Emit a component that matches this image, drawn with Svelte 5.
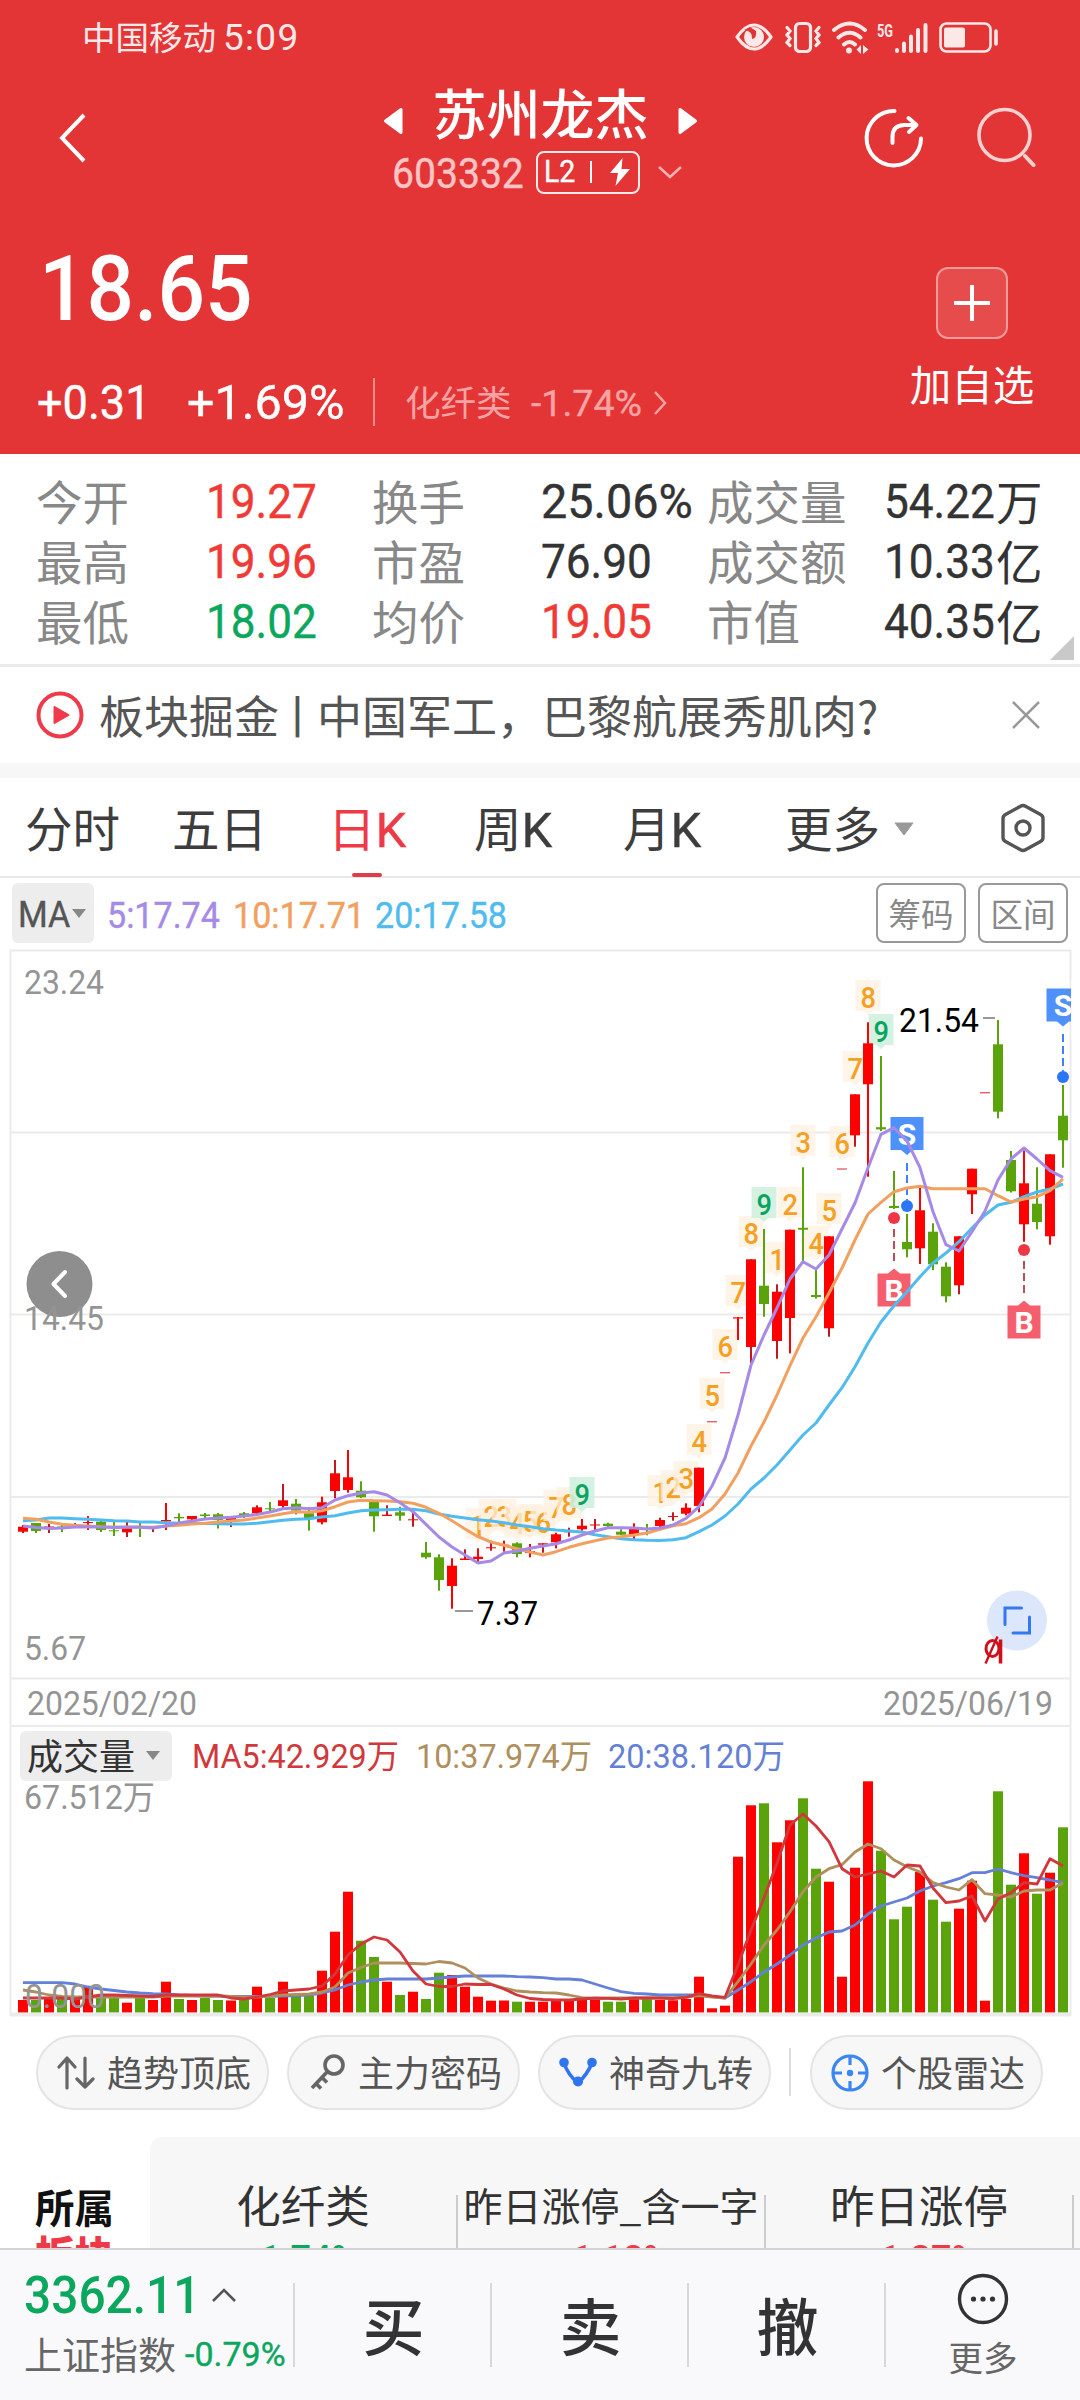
<script>
  const X0 = 23;
  const STEP = 13;
  const cx = (i) => X0 + STEP * i;

  // [direction, body top, body bottom, high, low]
  const candles = [
    ['r', 1526.7, 1531.7, 1525, 1533], ['g', 1523, 1531, 1523, 1533], ['r', 1526.5, 1528, 1524, 1533],
    ['g', 1526.5, 1528, 1525, 1532], ['r', 1526.5, 1527.5, 1523, 1528], ['r', 1522, 1523, 1516, 1530],
    ['g', 1521.7, 1530, 1520, 1532], ['g', 1530.3, 1531.3, 1520, 1536], ['r', 1527.3, 1532.3, 1521, 1537],
    ['g', 1526.5, 1527.5, 1523, 1537], ['r', 1526.5, 1528, 1526, 1532], ['r', 1520, 1521.5, 1503, 1530],
    ['g', 1517, 1518.3, 1513.3, 1522], ['r', 1516, 1519.3, 1516, 1520], ['g', 1514.5, 1516, 1513, 1518],
    ['g', 1514.3, 1520, 1513, 1528.5], ['r', 1517.5, 1520, 1517, 1527], ['g', 1513.3, 1515, 1512, 1518],
    ['r', 1507.3, 1513.3, 1505.3, 1514], ['g', 1508.3, 1509.3, 1502, 1511], ['r', 1500.3, 1506, 1484, 1508],
    ['g', 1503.7, 1510.5, 1499, 1514.5], ['g', 1513.3, 1518, 1507, 1530.7], ['r', 1502.3, 1522.3, 1496.7, 1524.3],
    ['r', 1473.3, 1491, 1460, 1498.3], ['r', 1477.3, 1490, 1450, 1492.7], ['g', 1490.7, 1497.3, 1481.3, 1498],
    ['g', 1502, 1516.3, 1502, 1531.7], ['r', 1514.7, 1516, 1505.3, 1516], ['g', 1512.3, 1515.7, 1506.7, 1520.7],
    ['r', 1519.3, 1520.3, 1512.7, 1526.7], ['g', 1552.7, 1557.3, 1542, 1558.7], ['g', 1557.3, 1580, 1554.3, 1590.7],
    ['r', 1565.7, 1586, 1558.3, 1608.7], ['r', 1558.5, 1560, 1549.3, 1560], ['r', 1556.7, 1559, 1548.3, 1562],
    ['r', 1547.3, 1548.3, 1540.7, 1550.7], ['r', 1544.7, 1545.7, 1540.7, 1551.7], ['g', 1543.3, 1554, 1542.3, 1557.3],
    ['r', 1551, 1553, 1544, 1557.3], ['r', 1543.3, 1544.7, 1543.3, 1552.7], ['r', 1534.3, 1542.3, 1532.7, 1548.3],
    ['r', 1531.3, 1532.3, 1527.7, 1536.7], ['r', 1525.7, 1529.3, 1519, 1530.7], ['r', 1524.5, 1525.5, 1519, 1530],
    ['g', 1523.7, 1526, 1522.7, 1528.3], ['g', 1531.7, 1534.7, 1529.3, 1535], ['r', 1528, 1534.3, 1523.3, 1539],
    ['g', 1528.3, 1529.3, 1524, 1535.3], ['r', 1520, 1526, 1517.7, 1527], ['r', 1516, 1517, 1512.3, 1520.7],
    ['r', 1507.7, 1513.7, 1503.3, 1515.3], ['r', 1467.7, 1506, 1467.7, 1512.3], ['d', 1421, 1422.4, 1421, 1422],
    ['d', 1372, 1373.4, 1372, 1373], ['r', 1317.3, 1318.5, 1317.3, 1340], ['r', 1259.3, 1347, 1259.3, 1363],
    ['g', 1285.7, 1304, 1229, 1316.7], ['r', 1291.7, 1341, 1284.3, 1358.7], ['r', 1229.7, 1318, 1229.7, 1353.3],
    ['g', 1227.8, 1229.7, 1167.3, 1261.7], ['g', 1295, 1297, 1270, 1298.5], ['r', 1236.3, 1328.3, 1236.3, 1336.7],
    ['d', 1168.3, 1169.7, 1168, 1169], ['r', 1094.3, 1135.3, 1094.3, 1146.7], ['r', 1043.3, 1084.3, 1022.3, 1176.7],
    ['g', 1127.2, 1129.4, 1056, 1131], ['g', 1206, 1208, 1171, 1209], ['g', 1242, 1249.3, 1214, 1257.3],
    ['r', 1210.3, 1248.3, 1187, 1264], ['g', 1231.7, 1264.3, 1223.3, 1270], ['g', 1266.7, 1296.3, 1262.3, 1302.3],
    ['r', 1236.3, 1285.3, 1236.3, 1294.3], ['r', 1168.7, 1194.3, 1168.7, 1214], ['d', 1092, 1093.4, 1092, 1093],
    ['g', 1044.3, 1111.7, 1020, 1118.3], ['g', 1160, 1191.3, 1151, 1192.5], ['r', 1183.3, 1224.3, 1149.3, 1241.7],
    ['g', 1203.7, 1222, 1167.3, 1229.3], ['r', 1154.3, 1236.3, 1154.3, 1244.7], ['g', 1115.7, 1140.3, 1085, 1167.7]
  ];

  const ma5 = [1526, 1527.5, 1528.5, 1528, 1527, 1526.7, 1527, 1527.5, 1527.3, 1527.3, 1528, 1526, 1523, 1521, 1519, 1518, 1517.3, 1516, 1514.5, 1512, 1508.7, 1507.7, 1508.7, 1507.7, 1500, 1495.7, 1493, 1491.7, 1495, 1502.7, 1511.7, 1524.3, 1537, 1547, 1555, 1563, 1561, 1553, 1551, 1548.3, 1546, 1543.7, 1540, 1535, 1531, 1527.7, 1527.7, 1528, 1529, 1528, 1525, 1518.3, 1506.7, 1486, 1458, 1415, 1365, 1335, 1308, 1279, 1261.7, 1269, 1255, 1229, 1203, 1167.7, 1134.3, 1127.7, 1141, 1167.7, 1211.7, 1244.7, 1251, 1231.7, 1211, 1180, 1159, 1148, 1159, 1170.7, 1177.3];
  const ma10 = [1518.3, 1519.3, 1522, 1524.3, 1525.3, 1526, 1526.7, 1527, 1527, 1527, 1527.3, 1526, 1525.3, 1524, 1523.3, 1522, 1521, 1520, 1518, 1516, 1513.7, 1511.7, 1512.3, 1510.7, 1506.7, 1502, 1500.3, 1500.7, 1501, 1501.7, 1503.3, 1507.3, 1513.3, 1520.7, 1529, 1536.7, 1542, 1545.3, 1548.7, 1552, 1555, 1551.7, 1547.3, 1543.7, 1540.7, 1538, 1536.7, 1535, 1533, 1529.3, 1525.7, 1523.7, 1517.7, 1509, 1494, 1473, 1446, 1422, 1395, 1365.7, 1338, 1316.7, 1293, 1268, 1240, 1214, 1202.3, 1191.7, 1188, 1186.3, 1188.7, 1188.7, 1188.7, 1188.7, 1188.7, 1195.7, 1202, 1199, 1196.7, 1190.7, 1179];
  const ma20 = [1520.7, 1520, 1518, 1518, 1518.7, 1519.3, 1520, 1520.7, 1521, 1522, 1522, 1522.7, 1523.3, 1523.5, 1523.5, 1523.7, 1524, 1524, 1523.3, 1521.7, 1520.3, 1519.3, 1518.7, 1517, 1515.7, 1513, 1510.7, 1510, 1509.7, 1509.3, 1509.3, 1510.7, 1514, 1516.3, 1518, 1519.7, 1521, 1522.7, 1525, 1526.7, 1528.7, 1530, 1531, 1532, 1534.7, 1536.7, 1538.7, 1539.7, 1540.3, 1540.5, 1539.7, 1537.7, 1531.7, 1525, 1516, 1504, 1489, 1478, 1465, 1450, 1435, 1423, 1405, 1387.7, 1366.7, 1343, 1322, 1305.7, 1291.7, 1276.7, 1263, 1253, 1241.7, 1228, 1215, 1205, 1202.3, 1196.7, 1192, 1189, 1184];

  const volTops = [2000, 2000, 1997, 1998, 1998, 1987, 1998, 1998, 2002.7, 1998, 2000, 1981.7, 1999, 2000, 1998, 2000, 2000.5, 1999, 1986.7, 1998, 1981.7, 1996, 1996, 1970.7, 1931.7, 1891.7, 1940.7, 1957, 1981.7, 1995, 1991.7, 1999, 1972.7, 1975, 1986.7, 1996.7, 2000.7, 2000.5, 2001.7, 2001.7, 2001.7, 1999, 1999, 1998, 1999, 2001.7, 2001.7, 1999, 1999, 2000, 2000.3, 1999, 1976.7, 2008.3, 2005.7, 1856.7, 1805.3, 1803.3, 1842.3, 1820.3, 1798.3, 1868.7, 1881.7, 1976.7, 1867.7, 1781.3, 1850.7, 1919.3, 1906.7, 1872, 1899.7, 1921.7, 1908.7, 1880.7, 2000.7, 1791.3, 1884.7, 1853.3, 1893.7, 1872.7, 1827.3];
  const volDirs = 'rgrgrrggrgrrgrggrgrgrggrrrggrgrggrrrrrgrrrrrrggrgrrrrrrrrgrrggrrrrgggrggrrrggrgrg';
  const volumes = volTops.map((top, i) => ({ i, top, up: volDirs[i] === 'r' }));

  const vma5 = [1998, 1998, 1998, 1998, 1999, 1997, 1995, 1995, 1995.5, 1996, 1996.5, 1995, 1995, 1995, 1995, 1995, 1998, 1999, 1997, 1994.5, 1991, 1990, 1989, 1986, 1974, 1955, 1944, 1937, 1940, 1952, 1971, 1984, 1986.5, 1986.5, 1984, 1984.5, 1984.5, 1989, 1995, 1998.5, 1999.5, 2000, 2000, 1999, 1998, 1998.3, 1999, 1998, 1998, 1998, 1998.5, 1997.3, 1993.7, 1996, 1997.3, 1965, 1930, 1898, 1863, 1825, 1814, 1826, 1841.7, 1868.7, 1877, 1874, 1871, 1877, 1865, 1866, 1888, 1902.7, 1901, 1896, 1921, 1899, 1892.7, 1882.7, 1884, 1858.7, 1866];
  const vma10 = [1990, 1992, 1995, 1996.5, 1997, 1997, 1997, 1997, 1997, 1997, 1997, 1996, 1996, 1996, 1996, 1996, 1996.5, 1997, 1997, 1996, 1995, 1994.5, 1994, 1992, 1987, 1973, 1967.5, 1963, 1963, 1963, 1963.5, 1964, 1961.5, 1963, 1968, 1978, 1984, 1988, 1991, 1992, 1992.7, 1993, 1995, 1997.7, 1998.5, 1998, 1998, 1998, 1998, 1998, 1998, 1997, 1995.5, 1997, 1998, 1981.7, 1964, 1945, 1930, 1911.7, 1891.7, 1877, 1868.7, 1864.7, 1852, 1844, 1848.7, 1860, 1866.7, 1872, 1882.7, 1887, 1890, 1879.7, 1893.7, 1895, 1897, 1891, 1890, 1890, 1883];
  const vma20 = [1982.7, 1982.7, 1982.7, 1982.7, 1984, 1987, 1989, 1990.5, 1992, 1993, 1993.7, 1994, 1995, 1995.5, 1996, 1996, 1996.5, 1996.5, 1996.5, 1996.3, 1996, 1995.5, 1995, 1993, 1990, 1985, 1982, 1980, 1979, 1979, 1979, 1979, 1978, 1977, 1976, 1976, 1976, 1976, 1976.7, 1977, 1977.7, 1979, 1979, 1980, 1984, 1988, 1991.7, 1993.3, 1994, 1995, 1995, 1995, 1995, 1996.7, 1998, 1990, 1981.7, 1972, 1964, 1955, 1945, 1938, 1932, 1931, 1925, 1914, 1906, 1902, 1898, 1891, 1886, 1882.7, 1878.7, 1872.7, 1872.7, 1869, 1872.7, 1875.7, 1877.7, 1880, 1882.7];

  const line = (ys) => ys.map((y, i) => `${cx(i)},${y}`).join(' ');

  // [candle index, count, top of the tag]
  const counts = [
    [35, '1', 1508], [36, '2', 1499], [37, '3', 1499], [38, '4', 1506], [39, '5', 1504], [40, '6', 1505],
    [41, '7', 1490], [42, '8', 1487], [43, '9', 1477], [49, '1', 1475], [50, '2', 1470], [51, '3', 1461],
    [52, '4', 1424], [53, '5', 1378], [54, '6', 1329], [55, '7', 1275], [56, '8', 1216], [57, '9', 1187],
    [58, '1', 1242], [59, '2', 1187], [60, '3', 1125], [61, '4', 1226], [62, '5', 1193], [63, '6', 1126],
    [64, '7', 1051], [65, '8', 980], [66, '9', 1014]
  ];

  const trades = [
    { kind: 'S', x: 907, box: 1117, d1: 1163, d2: 1200, dot: 1206 },
    { kind: 'S', x: 1063, box: 988.5, d1: 1034, d2: 1071, dot: 1077 },
    { kind: 'B', x: 894, box: 1273.5, d1: 1229, d2: 1264, dot: 1218 },
    { kind: 'B', x: 1024, box: 1305.5, d1: 1261, d2: 1296, dot: 1250 }
  ];

  const stats = [
    ['今开', '19.27', 'up'], ['换手', '25.06%', 'percent'], ['成交量', '54.22', '', '万'],
    ['最高', '19.96', 'up'], ['市盈', '76.90', ''], ['成交额', '10.33', '', '亿'],
    ['最低', '18.02', 'down'], ['均价', '19.05', 'up'], ['市值', '40.35', '', '亿']
  ];
</script>

<div class="page">
  <header class="hero">
    <div class="status">
      <span class="carrier">中国移动</span><span class="clock">5:09</span>
      <svg class="status-icons" width="290" height="40" viewBox="0 0 290 40">
        <g fill="none" stroke="#fde8e8" stroke-width="3.2" stroke-linecap="round">
          <path d="M2 19Q19 -5 36 19Q19 43 2 19Z" stroke-linejoin="round" />
          <rect x="60.500" y="5.500" width="15" height="28" rx="4" />
          <path d="M52 10l3 3.500-3 4 3 3.500-3 4 3 3M84 10l-3 3.500 3 4-3 3.500 3 4-3 3" transform="translate(0 -.5)" />
          <path d="M99 12Q114.500 -1 130 12M103.500 19.500Q114.500 10 125.500 19.500M109 26.500Q114.500 21.500 120 26.500" stroke-width="4" />
          <rect x="205.500" y="5.500" width="50" height="28" rx="6" stroke-width="2.600" />
          <path d="M162 32v1M169 25.500v7.500M176 18.500v14.500M183 12v21M190.500 7v26" stroke-width="4" />
          <path d="M261 13v13" stroke-width="3.600" />
        </g>
        <circle cx="19" cy="19" r="10" fill="#fde8e8" />
        <path d="M9 12q9 1 8 9q5-1 4-8l-6-4z" fill="#e23434" />
        <circle cx="114" cy="32.500" r="3" fill="#fde8e8" />
        <path d="M126 27v9l-4.500-4.500zM128 27v9l5.500-4.500z" fill="#fde8e8" />
        <rect x="209" y="9.500" width="21" height="20" rx="2" fill="#fde8e8" />
        <text x="142" y="18.500" class="five-g" textLength="16" lengthAdjust="spacingAndGlyphs">5G</text>
      </svg>
    </div>

    <div class="nav">
      <svg class="back" width="30" height="52" viewBox="0 0 30 52"><path d="M26 3 4 26 26 49" fill="none" stroke="#fff" stroke-width="4" /></svg>
      <div class="title-block">
        <div class="title-row">
          <svg width="20" height="28" viewBox="0 0 20 28"><path d="M18 2.500v23L2.500 14z" fill="#fff" stroke="#fff" stroke-width="3" stroke-linejoin="round" /></svg>
          <h1>苏州龙杰</h1>
          <svg width="20" height="28" viewBox="0 0 20 28"><path d="M2 2.500v23L17.500 14z" fill="#fff" stroke="#fff" stroke-width="3" stroke-linejoin="round" /></svg>
        </div>
        <div class="code-row">
          <span class="code num">603332</span>
          <span class="level">
            <span class="num">L2</span><i></i>
            <svg width="22" height="30" viewBox="0 0 22 30"><path d="M13.500 1 1 16h8L6.500 29 21 12h-8.500z" fill="#fff" /></svg>
          </span>
          <svg class="drop" width="24" height="14" viewBox="0 0 24 14"><path d="M1 2l11 10L23 2" fill="none" stroke="#ffb3b3" stroke-width="2.500" /></svg>
        </div>
      </div>
      <div class="nav-actions">
        <svg width="60" height="60" viewBox="0 0 60 60" fill="none" stroke="#fff" stroke-width="4" stroke-linecap="round">
          <path d="M30.500 3A27.200 27.200 0 1 0 57 30.500" />
          <path d="M28.500 35v-6q0-12 12-12h11M44.500 10l8 7-7.500 7" stroke-linejoin="round" />
        </svg>
        <svg width="60" height="60" viewBox="0 0 60 60" fill="none" stroke="#ffd0d0" stroke-width="3.600" stroke-linecap="round">
          <circle cx="28.500" cy="28" r="25.500" /><path d="M49 49l8.500 9" stroke-width="4" />
        </svg>
      </div>
    </div>

    <div class="quote">
      <div class="price num">18.65</div>
      <div class="change-row">
        <span class="chg num">+0.31</span>
        <span class="pct num">+1.69%</span>
        <i></i>
        <span class="sector">化纤类</span>
        <span class="sector-pct num">-1.74%</span>
        <svg width="14" height="26" viewBox="0 0 14 26"><path d="M2 2l10 11L2 24" fill="none" stroke="#f7a3a3" stroke-width="2.500" /></svg>
      </div>
    </div>
    <div class="watch">
      <div class="plus"><svg width="36" height="36" viewBox="0 0 36 36"><path d="M18 1v34M1 18h34" stroke="#fff" stroke-width="4" stroke-linecap="round" /></svg></div>
      <span>加自选</span>
    </div>
  </header>

  <section class="stats">
    {#each stats as [label, value, tone, unit]}
      <span class="label">{label}</span>
      <span class="value {tone}"><span class="num">{value}</span>{#if unit}<span class="unit">{unit}</span>{/if}</span>
    {/each}
    <svg class="corner" width="24" height="24" viewBox="0 0 24 24"><path d="M24 0v24H0z" fill="#c9c9c9" /></svg>
  </section>

  <section class="news">
    <svg width="48" height="48" viewBox="0 0 48 48"><circle cx="24" cy="24" r="21.500" fill="none" stroke="#ee3a4a" stroke-width="4" /><path d="M18.500 16v16l14-8z" fill="#ee3a4a" stroke="#ee3a4a" stroke-width="2" stroke-linejoin="round" /></svg>
    <p>板块掘金<span class="bar">丨</span>中国军工，巴黎航展秀肌肉?</p>
    <svg class="close" width="28" height="28" viewBox="0 0 28 28"><path d="M1 1l26 26M27 1 1 27" stroke="#999" stroke-width="2.500" /></svg>
  </section>

  <nav class="tabs">
    <span class="t1">分时</span>
    <span class="t2">五日</span>
    <span class="t3 active">日<b>K</b></span>
    <span class="t4">周<b>K</b></span>
    <span class="t5">月<b>K</b></span>
    <span class="t6">更多</span>
    <svg class="caret" width="20" height="14" viewBox="0 0 20 14"><path d="M1 1h18l-9 12z" fill="#999" stroke="#999" stroke-linejoin="round" /></svg>
    <svg class="hex" width="46" height="50" viewBox="0 0 46 50" fill="none" stroke="#555" stroke-width="3.400" stroke-linejoin="round">
      <path d="M20.500 3.200q2.500-1.400 5 0l15 8.400q2.500 1.400 2.500 4v18.800q0 2.600-2.500 4l-15 8.400q-2.500 1.400-5 0l-15-8.400q-2.500-1.400-2.500-4V15.600q0-2.600 2.500-4z" />
      <circle cx="23" cy="25" r="7" />
    </svg>
  </nav>

  <div class="ma-bar">
    <span class="ma-select"><span class="num">MA</span><svg width="14" height="9" viewBox="0 0 14 9"><path d="M0 0h14L7 9z" fill="#888" /></svg></span>
    <span class="num m5">5:17.74</span>
    <span class="num m10">10:17.71</span>
    <span class="num m20">20:17.58</span>
    <span class="chip">筹码</span>
    <span class="chip">区间</span>
  </div>

  <svg class="chart" width="1080" height="1072" viewBox="0 948 1080 1072">
    <g stroke="#ebebeb" stroke-width="2" fill="none">
      <path d="M10 950.500H1071M10 1132.500H1070M10 1314.500H1070M10 1497H1070M10 1678.500H1070M10 1726H1070" />
      <path d="M10.500 950V2016M1070.500 950V2016" />
      <path d="M10 2014.500H1071" stroke-width="4" />
    </g>

    <circle cx="59.500" cy="1284" r="33" fill="#8e8e8e" />
    <path d="M65 1272l-11.500 12 11.500 12" fill="none" stroke="#fff" stroke-width="4" stroke-linecap="round" stroke-linejoin="round" />

    <g class="axis">
      <text x="24" y="994" textLength="80" lengthAdjust="spacingAndGlyphs">23.24</text>
      <text x="24" y="1330" textLength="80" lengthAdjust="spacingAndGlyphs">14.45</text>
      <text x="24" y="1660" textLength="62" lengthAdjust="spacingAndGlyphs">5.67</text>
      <text x="27" y="1714.500" textLength="170" lengthAdjust="spacingAndGlyphs">2025/02/20</text>
      <text x="883" y="1714.500" textLength="170" lengthAdjust="spacingAndGlyphs">2025/06/19</text>
    </g>

    {#each counts as [i, n, top]}
      <path d="M{cx(i) - 12.500} {top}h25v31h-8l-4.500 4-4.500-4h-8z" class={n === '9' ? 'tag nine' : 'tag'} />
      <text x={cx(i) - 7.500} y={top + 27.500} textLength="15.500" lengthAdjust="spacingAndGlyphs" class={n === '9' ? 'count nine-text' : 'count'}>{n}</text>
    {/each}

    {#each trades as t}
      <g class={t.kind === 'S' ? 'sell' : 'buy'}>
        <path d="M{t.x} {t.d1}V{t.d2}" class="dash" />
        {#if t.kind === 'S'}
          <path d="M{t.x - 16.500} {t.box}H{Math.min(t.x + 16.500, 1071)}v33H{t.x + 6}l-6 5-6-5H{t.x - 16.500}z" class="box" />
        {:else}
          <path d="M{t.x - 16.500} {t.box}h10.500l6-5 6 5h10.500v33h-33z" class="box" />
        {/if}
        <text x={t.x} y={t.box + 27.500}>{t.kind}</text>
      </g>
    {/each}
    <rect x="1071.500" y="980" width="9" height="60" fill="#fff" />

    {#each candles as [dir, top, bottom, high, low], i}
      {#if dir === 'd'}
        <rect x={cx(i) - 5} y={top} width="10" height={bottom - top} fill="#e8606c" />
      {:else}
        <rect x={cx(i) - 1} y={high} width="2" height={low - high} class={dir === 'g' ? 'fall' : i % 2 ? 'rise' : 'rise wick'} />
        <rect x={cx(i) - 5} y={top} width="10" height={bottom - top} class={dir === 'g' ? 'fall' : 'rise'} />
      {/if}
    {/each}

    <g fill="none" stroke-width="3" stroke-linejoin="round">
      <polyline points={line(ma20)} stroke="#4fbbee" />
      <polyline points={line(ma10)} stroke="#f2a060" />
      <polyline points={line(ma5)} stroke="#a58ae6" />
    </g>
    {#each trades as t}
      <circle cx={t.x} cy={t.dot} r="6" fill={t.kind === 'S' ? '#2a76f6' : '#ee3746'} />
    {/each}

    <g class="extreme">
      <path d="M983 1018h12M455 1611h18" stroke="#777" stroke-width="1.600" />
      <text x="899" y="1032" textLength="80" lengthAdjust="spacingAndGlyphs">21.54</text>
      <text x="477" y="1625" textLength="61" lengthAdjust="spacingAndGlyphs">7.37</text>
    </g>

    <g transform="translate(-8 -.5)">
      <circle cx="1025" cy="1621" r="30" fill="#dde7fb" />
      <path d="M1029.500 1608.500h-16.500v16.500M1037.500 1617.500v16h-16.500" fill="none" stroke="#3478f0" stroke-width="3" stroke-linecap="round" />
      <g fill="none" stroke="#cf0f1a">
        <ellipse cx="1000.500" cy="1649" rx="6.500" ry="8" stroke-width="3" />
        <path d="M1008.500 1640v24" stroke-width="3.600" />
        <path d="M993.500 1664l12-27" stroke-width="2.400" />
      </g>
    </g>

    <rect x="20" y="1731" width="152" height="50" rx="6" fill="#ededed" />
    <text x="27" y="1770" class="vol-name">成交量</text>
    <path d="M146 1751h14l-7 9z" fill="#888" />
    <g class="vol-ma">
      <text x="192" y="1768" textLength="207" lengthAdjust="spacingAndGlyphs" fill="#d1373b">MA5:42.929万</text>
      <text x="416" y="1768" textLength="176" lengthAdjust="spacingAndGlyphs" fill="#ae8f5d">10:37.974万</text>
      <text x="608" y="1768" textLength="177" lengthAdjust="spacingAndGlyphs" fill="#6480d6">20:38.120万</text>
    </g>

    {#each volumes as bar}
      <rect x={cx(bar.i) - 5} y={bar.top} width="10" height={2012.400 - bar.top} class={bar.up ? 'rise' : 'fall'} />
    {/each}
    <g fill="none" stroke-width="2.800" stroke-linejoin="round">
      <polyline points={line(vma20)} stroke="#6480d8" />
      <polyline points={line(vma10)} stroke="#ae8f5d" />
      <polyline points={line(vma5)} stroke="#d1373b" />
    </g>
    <g class="axis">
      <text x="24" y="1809" textLength="131" lengthAdjust="spacingAndGlyphs">67.512万</text>
      <text x="25" y="2007.500" textLength="80" lengthAdjust="spacingAndGlyphs">0.000</text>
    </g>
  </svg>

  <div class="tools">
    <span class="pill">
      <svg width="38" height="38" viewBox="0 0 38 38" fill="none" stroke="#666" stroke-width="3.200" stroke-linecap="round" stroke-linejoin="round"><path d="M10 34V5M2 13l8-9 8 9M28 4v29M20 25l8 8 8-8" /></svg><span>趋势顶底</span>
    </span>
    <span class="pill">
      <svg width="38" height="38" viewBox="0 0 38 38" fill="none" stroke="#666" stroke-width="3.600"><circle cx="26" cy="11" r="9" /><path d="M19.500 17.500 4 34M8 29.500l5 5M14 23.500l5 5" /></svg><span>主力密码</span>
    </span>
    <span class="pill">
      <svg width="38" height="38" viewBox="0 0 38 38"><path d="M5 9q4 12 14 20Q28 21 33 9" fill="none" stroke="#2f74f0" stroke-width="3.600" /><circle cx="5" cy="8.500" r="4.800" fill="#2f74f0" /><circle cx="33" cy="8.500" r="4.800" fill="#2f74f0" /><circle cx="19" cy="27.500" r="5" fill="#2f74f0" /></svg><span>神奇九转</span>
    </span>
    <i></i>
    <span class="pill">
      <svg width="38" height="38" viewBox="0 0 38 38" fill="none" stroke="#3a86f5" stroke-width="3.200"><circle cx="19" cy="19" r="17" /><path d="M19 2v9M19 27v9M2 19h9M27 19h9" /><circle cx="19" cy="19" r="3.200" fill="#3a86f5" stroke="none" /></svg><span>个股雷达</span>
    </span>
  </div>

  <section class="boards">
    <div class="belongs">所属<b>板块</b></div>
    <div class="board-list">
      <div class="board"><span>化纤类</span><em class="down">-1.74%</em></div>
      <div class="board"><span class="small">昨日涨停_含一字</span><em>+1.18%</em></div>
      <div class="board"><span>昨日涨停</span><em>+1.27%</em></div>
    </div>
  </section>

  <footer class="dock">
    <div class="index">
      <div class="index-top"><span class="num">3362.11</span><svg width="26" height="16" viewBox="0 0 26 16"><path d="M2 14 13 3l11 11" fill="none" stroke="#555" stroke-width="2.600" /></svg></div>
      <div class="index-sub">上证指数<span class="num">-0.79%</span></div>
    </div>
    <div class="act">买</div>
    <div class="act">卖</div>
    <div class="act">撤</div>
    <div class="more">
      <svg width="52" height="52" viewBox="0 0 52 52"><circle cx="26" cy="26" r="23.500" fill="none" stroke="#333" stroke-width="3.400" /><circle cx="16.500" cy="26" r="2.600" fill="#333" /><circle cx="26" cy="26" r="2.600" fill="#333" /><circle cx="35.500" cy="26" r="2.600" fill="#333" /></svg>
      更多
    </div>
  </footer>
</div>

<style>
  :global(body) { background: #fff; }
  .page {
    width: 1080px;
    height: 2400px;
    overflow: hidden;
    display: flex;
    flex-direction: column;
    background: #fff;
    color: #333;
    font-family: 'Noto Sans CJK SC', sans-serif;
    white-space: nowrap;
  }
  .page * { box-sizing: border-box; }
  svg { display: block; flex: none; }
  p { margin: 0; }
  /* condensed numerals: each slot has a fixed width, the glyphs narrow inside it */
  .num { display: block; flex: none; font-family: Roboto, sans-serif; font-weight: 400; -webkit-text-stroke: 0.4px currentColor; transform: scaleX(0.92); transform-origin: 0 50%; }
  i { display: block; flex: none; }

  .hero {
    height: 454px;
    flex: none;
    display: grid;
    grid-template: 76px 154px 224px / 880px 200px;
    background: #e33536;
    color: #fff;
  }
  .status { grid-column: 1 / 3; display: flex; align-items: center; padding: 0 55px 0 82px; color: #fde8e8; }
  .carrier { font-size: 33.500px; line-height: 72px; height: 76px; }
  .clock { font: 37px/76px Roboto, sans-serif; margin-left: 7px; letter-spacing: 0.035em; }
  .status-icons { margin: -1px 0 0 auto; width: 290px; }
  .five-g { font: 700 18px Roboto, sans-serif; fill: #fde8e8; }

  .nav { grid-column: 1 / 3; display: flex; }
  .back { margin: 36px 0 0 58px; }
  .title-block { margin: 0 0 0 295px; width: 315px; }
  .title-row { display: flex; align-items: center; justify-content: space-between; height: 74px; }
  .title-row svg { margin-top: 16px; }
  h1 { margin: -2px 0 0; font-size: 54px; line-height: 74px; font-weight: 500; }
  .code-row { display: flex; align-items: center; height: 44px; padding-left: 9px; }
  .code { font-size: 42.500px; line-height: 44px; width: 144px; color: #ffc4c4; margin-top: 4px; }
  .level { width: 104px; height: 43px; border: 2.500px solid #ffe9e9; border-radius: 8px; display: flex; align-items: center; padding-left: 6px; font-size: 31px; }
  .level .num { width: 38px; line-height: 36px; }
  .level i { width: 2px; height: 22px; background: #fff; margin: 0 17px 0 8px; }
  .drop { margin-left: 18px; }
  .nav-actions { display: flex; gap: 52px; margin: 32px 0 0 166px; }
  .nav-actions svg:last-child { margin-top: -1px; }

  .quote { display: flex; flex-direction: column; }
  .price { font-size: 91px; line-height: 100px; margin: 9px 0 0 39px; width: 300px; font-weight: 500; -webkit-text-stroke: 0; }
  .change-row { display: flex; align-items: center; height: 56px; margin-top: 36px; padding-left: 37px; font-size: 48px; line-height: 56px; }
  .chg { width: 150px; transform: scaleX(0.94); }
  .pct { width: 186px; transform: scaleX(1.01); }
  .change-row i { width: 2px; height: 48px; background: #f08c8c; margin-right: 30px; margin-top: -2px; }
  .sector { font-size: 35.500px; color: #f7a3a3; width: 126px; margin-top: -4px; }
  .sector-pct { font-size: 37.500px; color: #f7a3a3; width: 122px; transform: none; }
  .watch { display: flex; flex-direction: column; align-items: center; font-size: 41.500px; line-height: 56px; padding: 37px 16px 0 0; }
  .plus { width: 72px; height: 72px; border: 2px solid #f29c9c; background: #e74c4d; border-radius: 12px; display: flex; align-items: center; justify-content: center; margin-bottom: 16px; }

  .stats {
    height: 213px;
    flex: none;
    position: relative;
    display: grid;
    grid-template-columns: 170px 166px 169px 166px 177px 160px;
    grid-auto-rows: 60px;
    padding: 18px 36px 0 36px;
    border-bottom: 3px solid #ebebeb;
    font-size: 46.500px;
    line-height: 55px;
  }
  .label { color: #888; }
  .value { display: flex; font-size: 49px; }
  .value .num { width: 112px; line-height: 60px; transform: scaleX(0.9); }
  .value.percent .num { transform: scaleX(0.955); }
  .unit { font-size: 46.500px; }
  .up { color: #f03a36; }
  .down { color: #0ba75d; }
  .corner { position: absolute; right: 6px; bottom: 4px; }

  .news { height: 96px; flex: none; display: flex; align-items: center; padding: 0 40px 0 36px; font-size: 45px; line-height: 60px; color: #555; }
  .news p { margin-left: 15px; }
  .bar { margin: 0 -3px 0 -4px; }
  .news .close { margin-left: auto; }

  .tabs {
    height: 115px;
    flex: none;
    display: flex;
    align-items: center;
    border-top: 15px solid #f7f7f7;
    border-bottom: 2px solid #e8e8e8;
    padding-left: 25px;
    font-size: 47.500px;
    line-height: 98px;
    color: #3d3d3d;
  }
  .tabs b { font-family: Roboto, sans-serif; font-size: 49px; font-weight: 400; -webkit-text-stroke: 0.4px currentColor; }
  .tabs span { height: 98px; }
  .tabs .t1 { width: 147px; }
  .tabs .t2 { width: 156px; }
  .tabs .t3 { width: 146px; color: #ee3a46; }
  .tabs .t4 { width: 149px; }
  .tabs .t5 { width: 162px; }
  .tabs .t6 { width: 109px; }
  .active::after { content: ''; display: block; width: 30px; height: 4px; border-radius: 2px; background: #df3c4a; margin: -7px 0 0 24px; }
  .hex { margin: 2px 0 0 86px; }
  .caret { margin-top: 4px; }

  .ma-bar { height: 70px; flex: none; display: flex; align-items: center; padding: 2px 12px 2px 12px; font-size: 37px; }
  .ma-bar > .num { margin-top: 4px; }
  .ma-select { width: 82px; height: 60px; border-radius: 6px; background: #ededed; display: flex; align-items: center; padding-left: 6px; font-size: 37px; color: #555; margin-right: 13px; }
  .ma-select .num { width: 52px; margin-top: 3px; }
  .ma-select svg { margin-left: 2px; }
  .m5 { color: #a58ae6; width: 126px; }
  .m10 { color: #f2a060; width: 142px; }
  .m20 { color: #4fbbee; width: 150px; }
  .chip { width: 90px; height: 60px; border: 2px solid #999; border-radius: 8px; font-size: 32.500px; line-height: 55px; text-align: center; color: #888; margin-left: 12px; }
  .m20 + .chip { margin-left: auto; }

  .chart { font-family: Roboto, 'Noto Sans CJK SC', sans-serif; }
  .axis { fill: #949494; font-size: 33px; }
  .extreme { fill: #000; font-size: 33px; }
  .vol-ma { font-size: 33px; }
  .vol-name { font: 36px 'Noto Sans CJK SC', sans-serif; fill: #333; }
  .rise { fill: #fe0000; }
  .wick { fill: #c01a20; }
  .fall { fill: #5aa30b; }
  .tag { fill: #fef0e0; fill-opacity: 0.75; }
  .nine { fill: #cdeedd; fill-opacity: 0.85; }
  .count { font-size: 30px; font-weight: 500; fill: #f5a023; }
  .nine-text { fill: #0ba45f; }
  .dash { stroke-width: 2; stroke-dasharray: 8 4; fill: none; }
  .sell .dash { stroke: #3d82f5; }
  .buy .dash { stroke: #c2485a; }
  .sell .box { fill: #4f91fb; }
  .buy .box { fill: #f55f6d; }
  .sell text, .buy text { fill: #fff; font-size: 30px; font-weight: 700; text-anchor: middle; }

  .tools { height: 117px; flex: none; display: flex; align-items: flex-start; padding: 15px 0 0 36px; }
  .pill { width: 233px; height: 75px; border: 2px solid #e4e4e4; border-radius: 38px; background: #f7f7f7; display: flex; align-items: center; gap: 12px; padding-left: 19px; margin-right: 18px; font-size: 36px; line-height: 72px; color: #555; }
  .pill span { margin-top: -3px; }
  .tools i { width: 2px; height: 48px; background: #dcdcdc; margin: 13px 19px 0 0; }

  .boards { height: 111px; flex: none; display: flex; overflow: hidden; }
  .belongs { width: 150px; flex: none; padding: 45px 0 0 35px; font-size: 39.500px; line-height: 47px; font-weight: 700; color: #111; }
  .belongs b { display: block; color: #ee3a46; }
  .board-list { flex: 1; display: flex; background: #f7f7f7; border-radius: 12px 0 0 0; }
  .board { width: 308px; flex: none; display: flex; flex-direction: column; align-items: center; font-size: 44.500px; line-height: 54px; padding: 40px 2px 0 0; background: linear-gradient(#ccc, #ccc) right 58px / 2px 60px no-repeat; }
  .small { font-size: 39px; }
  .board em { font: 500 36px/44px Roboto, sans-serif; margin-top: 6px; color: #ee3a46; }
  .board em.down { color: #0ba75d; }

  .dock { height: 152px; flex: none; display: flex; background: #f9f9fc; border-top: 2px solid #d2d2d4; }
  .index { width: 295px; padding: 14px 0 0 24px; background: linear-gradient(#d8d8da, #d8d8da) right 33px / 2px 84px no-repeat; }
  .index-top { display: flex; align-items: center; height: 62px; font-size: 52px; line-height: 62px; color: #0ba75d; }
  .index-top .num { width: 176px; margin-top: 1px; font-weight: 500; -webkit-text-stroke: 0; }
  .index-top svg { margin-left: 11px; }
  .index-sub { display: flex; align-items: center; font-size: 38px; line-height: 54px; margin-top: -2px; color: #666; }
  .index-sub .num { font-size: 34px; color: #0ba75d; margin: 3px 0 0 9px; transform: none; }
  .act { width: 197px; font-size: 62px; line-height: 148px; font-weight: 500; text-align: center; background: linear-gradient(#d8d8da, #d8d8da) right 33px / 2px 84px no-repeat; }
  .more { flex: 1; display: flex; flex-direction: column; align-items: center; padding-top: 23px; font-size: 34.500px; line-height: 63px; color: #666; }
</style>
